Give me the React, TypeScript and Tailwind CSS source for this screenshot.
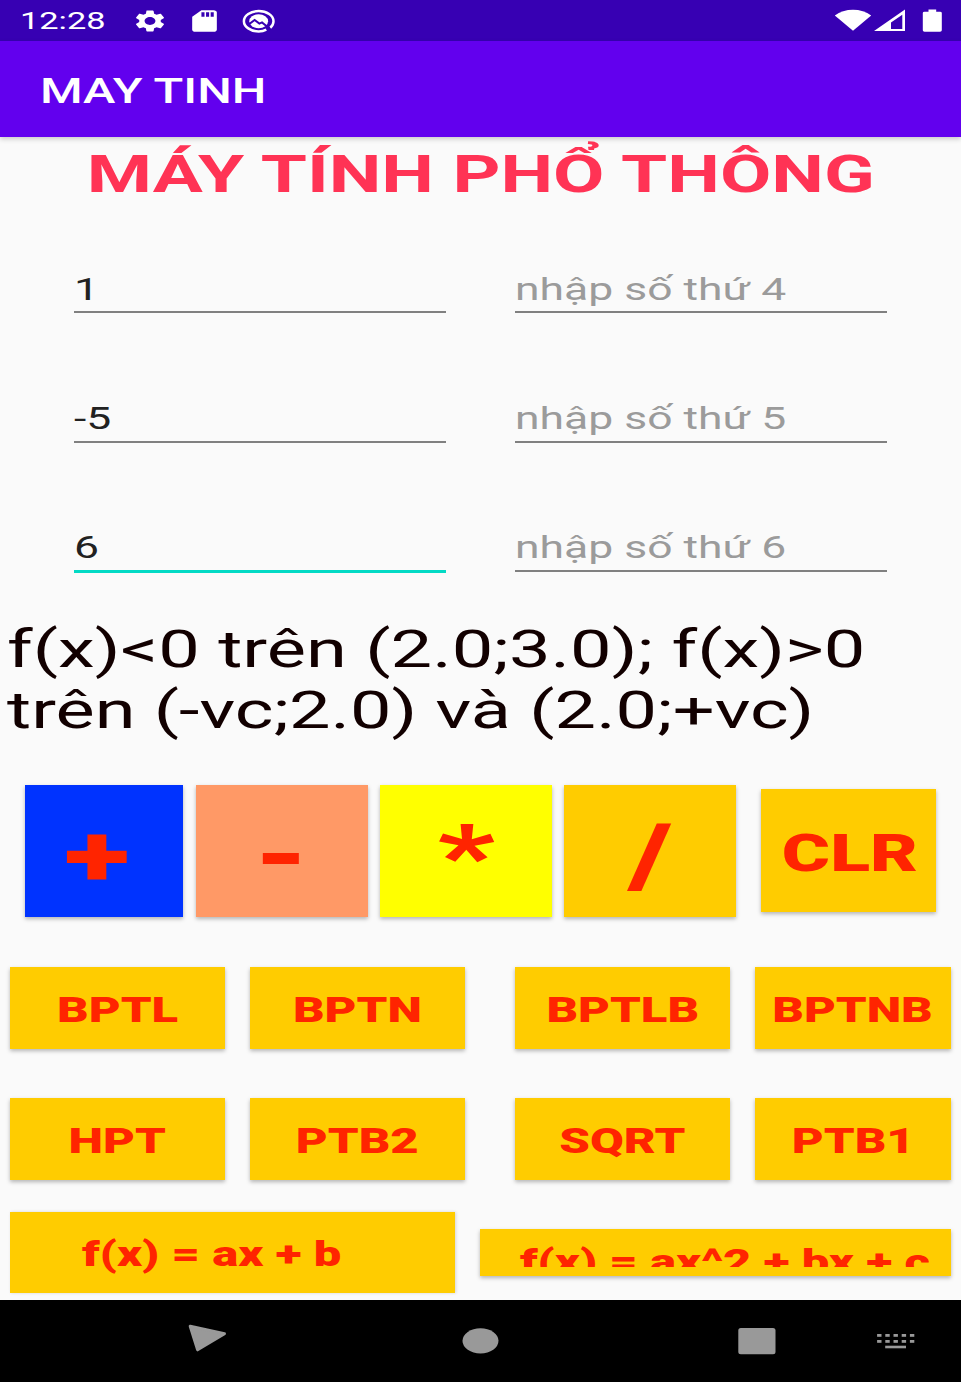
import type { ReactNode } from "react";
import { MdSdCard, MdSettings } from "react-icons/md";

type StretchProps = { children: ReactNode; className: string };

/* Wide Roboto lettering used throughout the calculator. */
function Wide({ children, className }: StretchProps) {
  return (
    <span className={`inline-block shrink-0 whitespace-nowrap leading-[1.172] ${className}`}>
      {children}
    </span>
  );
}

function StatusBar() {
  return (
    <div className="flex h-[41px] shrink-0 items-center bg-[#3700b3] text-white">
      <div className="w-[111px] pl-[20px] pt-[2px]">
        <Wide className="origin-left scale-x-[1.42] text-[24.2px]">12:28</Wide>
      </div>
      <MdSettings preserveAspectRatio="none" className="ml-[21px] h-[26px] w-[36px]" />
      <MdSdCard preserveAspectRatio="none" className="ml-[17.5px] h-[26px] w-[37px]" />
      <svg viewBox="0 0 36 26" className="ml-[18px] h-[26px] w-[36px]" fill="none">
        <path
          d="M25.3 21.7C23 22.9 20.5 23.4 17.7 23.4C9.6 23.4 2.9 18.8 2.9 13.2S9.6 3 17.7 3S32.5 7.6 32.5 13.2C32.5 15.8 31.3 18 29.3 19.8"
          stroke="white"
          strokeWidth="2.5"
        />
        <ellipse cx="17.7" cy="13.2" rx="9.4" ry="7" fill="white" />
        <path d="M7 17L13.6 11.9L18.4 15.6L21 14.4L28.5 20.6" stroke="#3700b3" strokeWidth="2" />
      </svg>
      <div className="flex-1" />
      <svg viewBox="834 0 110 41" className="mr-[17px] h-[41px] w-[110px]">
        <path d="M834.8 15.5C844.5 7.7 861.5 7.7 871.2 15.5L853 30.8Z" fill="white" />
        <path fillRule="evenodd" d="M874 31L905 9.5V31ZM891 29H902.3V14.7L891 22.4Z" fill="white" />
        <path
          d="M928.5 9.5H936.2V11.7H940Q941.8 11.7 941.8 13V30.3Q941.8 31.7 940 31.7H924.5Q922.8 31.7 922.8 30.3V13Q922.8 11.7 924.5 11.7H928.5Z"
          fill="white"
        />
      </svg>
    </div>
  );
}

type FieldProps = { text: string; hint?: boolean; active?: boolean };

function Field({ text, hint, active }: FieldProps) {
  return (
    <div className="flex h-[129.3px] w-[371.6px] flex-col justify-end">
      <div className={`flex h-[39.5px] ${hint ? "text-[#9b9b9b]" : "text-[#212121]"}`}>
        <Wide className="ml-[-0.5px] origin-left scale-x-[1.43] text-[31.1px]">{text}</Wide>
      </div>
      <div className="h-[4px]">
        <div className={active ? "h-[3.5px] bg-[#03dac5]" : "h-[2px] bg-[#808080]"} />
      </div>
    </div>
  );
}

type KeyProps = { label: string; box: string; text: string };

function Key({ label, box, text }: KeyProps) {
  return (
    <button
      className={`flex shrink-0 items-center justify-center font-black text-[#ff2400] shadow-[0_2px_4px_rgba(0,0,0,0.28)] ${box}`}
    >
      <Wide className={`scale-x-[1.42] ${text}`}>{label}</Wide>
    </button>
  );
}

const fieldRows = [
  { value: "1", hint: "nhập số thứ 4", active: false },
  { value: "-5", hint: "nhập số thứ 5", active: false },
  { value: "6", hint: "nhập số thứ 6", active: true },
];

const functionRows = [
  ["BPTL", "BPTN", "BPTLB", "BPTNB"],
  ["HPT", "PTB2", "SQRT", "PTB1"],
];

const functionBoxes = [
  "w-[215px] h-[82.4px] pt-[5px] bg-[#ffcc00]",
  "w-[215.6px] h-[82.4px] pt-[5px] bg-[#ffcc00] ml-[24.8px]",
  "w-[215.4px] h-[82.4px] pt-[5px] bg-[#ffcc00] ml-[49.6px]",
  "w-[196px] h-[82.4px] pt-[5px] bg-[#ffcc00] ml-[24.6px]",
];

function NavBar() {
  return (
    <div className="h-[82px] shrink-0 bg-black">
      <svg viewBox="0 1300 961 82" className="h-[82px] w-full" fill="#999999">
        <path
          d="M190.2 1326.2L224.5 1333.8L197.6 1349.8Z"
          stroke="#999999"
          strokeWidth="3"
          strokeLinejoin="round"
        />
        <ellipse cx="480.5" cy="1340.8" rx="18" ry="12.6" />
        <rect x="738.3" y="1328" width="37.2" height="26.2" rx="2.5" />
        {[877.1, 885.3, 893.5, 901.7, 909.9].map((x) => (
          <g key={x}>
            <rect x={x} y="1334" width="4.4" height="2.8" />
            <rect x={x} y="1340" width="4.4" height="2.8" />
          </g>
        ))}
        <rect x="885.2" y="1345.7" width="20.8" height="2.6" />
      </svg>
    </div>
  );
}

export default function App() {
  return (
    <div className="flex h-[1382px] w-[961px] flex-col overflow-hidden bg-[#fafafa] font-['Roboto',sans-serif]">
      <StatusBar />
      <header className="relative flex h-[96px] shrink-0 items-center bg-[#6200ee] pl-[40px] pt-[4px] text-white shadow-[0_2px_5px_rgba(0,0,0,0.2)]">
        <Wide className="origin-left scale-x-[1.415] text-[34.5px] font-medium">MAY TINH</Wide>
      </header>

      <main className="flex h-[1163px] shrink-0 flex-col">
        <h1 className="flex h-[49px] shrink-0 justify-center pt-[8px] text-[#ff3355]">
          <Wide className="scale-x-[1.439] text-[51.8px] font-bold">MÁY TÍNH PHỔ THÔNG</Wide>
        </h1>

        <section className="flex h-[388px] shrink-0 flex-col">
          {fieldRows.map((row) => (
            <div key={row.hint} className="flex gap-[69.6px] pl-[74px]">
              <Field text={row.value} active={row.active} />
              <Field text={row.hint} hint />
            </div>
          ))}
        </section>

        <section className="flex h-[211px] shrink-0 flex-col pl-[7px] pt-[46px] text-[51.8px] text-[#120000]">
          <Wide className="origin-left scale-x-[1.429]">{"f(x)<0 trên (2.0;3.0); f(x)>0"}</Wide>
          <Wide className="origin-left scale-x-[1.426]">trên (-vc;2.0) và (2.0;+vc)</Wide>
        </section>

        <section className="flex h-[182px] shrink-0 items-start pl-[25px]">
          <Key label="+" box="h-[132px] w-[158px] bg-[#0033ff] pt-[11px] pr-[13px]" text="text-[86.3px]" />
          <Key label="-" box="ml-[12.5px] h-[132px] w-[172px] bg-[#ff9966] pt-[10px]" text="text-[86.3px]" />
          <Key label="*" box="ml-[12px] h-[132px] w-[172px] bg-[#ffff00] pt-[11px] pl-px" text="text-[86.3px]" />
          <Key label="/" box="ml-[12px] h-[132px] w-[172px] bg-[#ffcc00] pt-[11px] pl-px" text="text-[86.3px]" />
          <Key label="CLR" box="ml-[25px] mt-[4px] h-[123px] w-[175px] bg-[#ffcc00] pt-[7px] pl-[3px]" text="text-[51.8px]" />
        </section>

        {functionRows.map((labels) => (
          <section key={labels[0]} className="flex h-[131px] shrink-0 pl-[10px]">
            {labels.map((label, i) => (
              <Key key={label} label={label} box={functionBoxes[i]} text="text-[34.5px]" />
            ))}
          </section>
        ))}

        <section className="flex shrink-0 items-start pl-[10px]">
          <button className="mt-[-17px] flex h-[81px] w-[445.4px] items-center justify-center bg-[#ffcc00] pr-[42px] pt-[3px] font-black text-[#ff2400] shadow-[1px_0_3px_rgba(0,0,0,0.15)]">
            <Wide className="scale-x-[1.415] text-[34.5px]">f(x) = ax + b</Wide>
          </button>
          <button className="ml-[25px] h-[46.5px] w-[470.5px] bg-[#ffcc00] pb-[9px] pt-[13px] font-black text-[#ff2400] shadow-[0_2px_4px_rgba(0,0,0,0.28)]">
            <span className="flex h-[24.5px] items-start justify-center overflow-hidden pl-[18px]">
              <Wide className="scale-x-[1.415] text-[34.5px]">f(x) = ax^2 + bx + c</Wide>
            </span>
          </button>
        </section>
      </main>

      <NavBar />
    </div>
  );
}
